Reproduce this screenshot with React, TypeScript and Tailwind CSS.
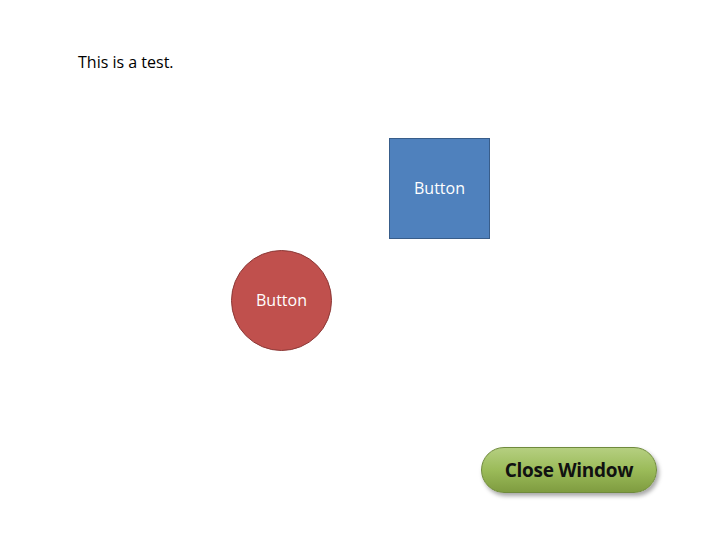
// Slide-style canvas with freely placed shapes

export default function App() {
  return (
    <div
      className="relative w-[720px] h-[540px] bg-white overflow-hidden"
      style={{ fontFamily: '"Open Sans", "Noto Sans", sans-serif' }}
    >
      <p className="absolute left-[78px] top-[51px] text-[16px] leading-[22px] text-black">
        This is a test.
      </p>

      {/* blue square button */}
      <button className="absolute left-[389px] top-[138px] w-[101px] h-[101px] bg-[#4f81bd] border border-[#385d8a] text-white text-[16px] leading-[20px] pb-[2px] flex items-center justify-center">
        Button
      </button>

      {/* red round button */}
      <button className="absolute left-[231px] top-[250px] w-[101px] h-[101px] rounded-full bg-[#c0504d] border border-[#8c3836] text-white text-[16px] leading-[20px] pb-[2px] flex items-center justify-center">
        Button
      </button>

      {/* close window pill */}
      <button className="absolute left-[481px] top-[447px] w-[176px] h-[46px] rounded-full border border-[#6f8a3c] bg-gradient-to-b from-[#b5cf80] via-[#9bbb59] to-[#7f9c40] shadow-[2px_3px_4px_rgba(0,0,0,0.35)] text-[#111] text-[19px] tracking-[-0.3px] font-bold flex items-center justify-center">
        Close Window
      </button>
    </div>
  );
}
